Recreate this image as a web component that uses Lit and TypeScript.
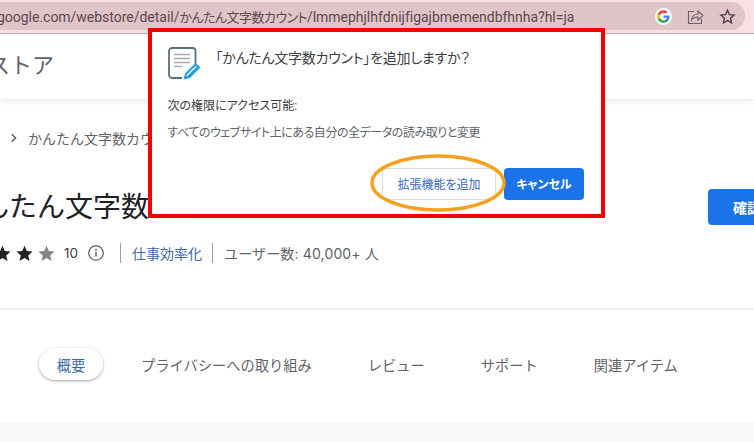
import { LitElement, html, css } from "lit";
import { customElement } from "lit/decorators.js";

const star = (fill: string) => html`<svg class="star" viewBox="0 0 24 24"><path fill=${fill} d="M12 2.2l2.9 6.7 7.3.7-5.5 4.8 1.6 7.1L12 17.8l-6.3 3.7 1.6-7.1-5.5-4.8 7.3-.7z"/></svg>`;

@customElement("app-root")
export class AppRoot extends LitElement {
  static styles = css`
    :host { display: block; position: relative; width: 754px; height: 442px; overflow: hidden; background: #fff;
      font-family: Roboto, "Noto Sans CJK JP", sans-serif; color: #3c4043; }
    .chrome { height: 34px; box-sizing: border-box; background: #fcdfe5; border-bottom: 1px solid #bfaeb3; padding: 2px 9px 0 0; }
    .omni { height: 28px; background: #e1c3ca; border-radius: 0 14px 14px 0; display: flex; align-items: center; padding-right: 9px; overflow: hidden; }
    .url { flex: 1; white-space: nowrap; font-size: 14px; letter-spacing: -.02px; color: #5b4a4f; margin-left: -3px; font-feature-settings: "palt"; }
    .url-cjk { font-size: 13px; letter-spacing: -.55px; }
    .omni-icons { display: flex; align-items: center; gap: 15px; }
    .omni-icons svg { display: block; }
    .store { height: 65px; box-sizing: border-box; padding-bottom: 7px; box-shadow: 0 2px 6px rgba(60,64,67,.12); display: flex; align-items: center; overflow: hidden; }
    .store span { font-size: 22px; color: #5f6368; margin-left: -78px; white-space: nowrap; }
    .crumb { display: flex; align-items: center; margin-top: 28px; height: 22px; padding-left: 9px; gap: 9px; white-space: nowrap; font-size: 14px; color: #5f6368; }
    .title { font-size: 28px; line-height: 36px; margin: 41px 0 0 -47px; color: #202124; white-space: nowrap; }
    .confirm { position: absolute; left: 708px; top: 189px; width: 80px; height: 36px; background: #1a73e8; color: #fff; border-radius: 4px;
      font-size: 14px; font-weight: 700; display: flex; align-items: center; padding-left: 25px; box-sizing: border-box; white-space: nowrap; }
    .meta { display: flex; align-items: center; height: 20px; margin-top: 17px; font-size: 14px; white-space: nowrap; margin-left: -7px; }
    .stars { display: flex; gap: 3px; }
    .star { width: 19px; height: 19px; display: block; }
    .count { margin-left: 8px; color: #3c4043; font-family: Inter, "Noto Sans CJK JP", sans-serif; font-size: 13.5px; }
    .info { margin: 0 16px 0 10px; display: block; }
    .sep { width: 1px; height: 20px; background: #9aa0a6; }
    .cat { color: #3c68a8; margin: 0 10px 0 11px; }
    .users { color: #5f6368; margin-left: 11px; font-family: Inter, "Noto Sans CJK JP", sans-serif; letter-spacing: .15px; }
    .rule { height: 2px; background: #f1f3f4; margin-top: 45px; }
    .tabs { display: flex; align-items: center; height: 32px; margin-top: 38px; padding-left: 39px; gap: 56px; font-size: 14.25px; color: #5f6368; white-space: nowrap; }
    .pill { width: 64px; height: 32px; margin-right: -18px; border-radius: 16px; background: #fff; box-shadow: 0 1px 3px rgba(60,64,67,.45);
      color: #3c68a8; display: flex; align-items: center; justify-content: center; }
    .foot { position: absolute; left: 0; right: 0; bottom: 0; height: 20px; background: #f8f9fa; }
    .dialog { position: absolute; left: 148px; top: 28px; width: 457px; height: 190px; box-sizing: border-box; border: 4.5px solid #f50000;
      background: #fff; padding: 14.5px 17px 0 15.5px; display: flex; flex-direction: column; font-feature-settings: "palt"; }
    .head { display: flex; align-items: flex-start; gap: 15px; }
    .head svg { display: block; flex: none; }
    .head p { margin: 1px 0 0; font-size: 14px; letter-spacing: -.25px; line-height: 20px; color: #3c4043; white-space: nowrap; }
    .access { margin: 17px 0 0; font-size: 12px; line-height: 18px; color: #3c4043; }
    .perm { margin: 9px 0 0; font-size: 12px; letter-spacing: -.45px; line-height: 18px; color: #5f6368; }
    .actions { display: flex; justify-content: flex-end; gap: 8px; margin-top: 26px; }
    .btn { height: 32px; box-sizing: border-box; border-radius: 4px; font-size: 12px; display: flex; align-items: center; justify-content: center; }
    .add { width: 114px; background: #fff; border: 1px solid #dadce0; color: #3c68b8; }
    .cancel { width: 80px; background: #1a73e8; color: #fff; font-weight: 700; }
    .ring { position: absolute; left: 370px; top: 154px; display: block; pointer-events: none; }
  `;

  render() {
    return html`
      <div class="chrome">
        <div class="omni">
          <span class="url">google.com/webstore/detail/<span class="url-cjk">かんたん文字数カウント</span>/lmmephjlhfdnijfigajbmemendbfhnha?hl=ja</span>
          <div class="omni-icons">
            <svg width="17" height="17" viewBox="0 0 24 24"><circle cx="12" cy="12" r="12" fill="#fff"/>
              <path fill="#4285f4" d="M20.6 12.2c0-.6 0-1.200-.2-1.700H12v3.300h4.800c-.2 1.100-.8 2-1.800 2.600v2.200h2.900c1.700-1.500 2.700-3.800 2.700-6.400z"/>
              <path fill="#34a853" d="M12 21c2.400 0 4.400-.8 5.900-2.200L15 16.600c-.8.500-1.800.9-3 .9-2.300 0-4.300-1.600-5-3.700H4v2.300C5.500 19 8.500 21 12 21z"/>
              <path fill="#fbbc05" d="M7 13.800c-.4-1.100-.4-2.500 0-3.600V7.900H4c-1.300 2.500-1.300 5.700 0 8.200z"/>
              <path fill="#ea4335" d="M12 6.600c1.300 0 2.500.5 3.400 1.300l2.600-2.600C16.400 3.900 14.400 3 12 3 8.500 3 5.500 5 4 7.900l3 2.300c.7-2.100 2.700-3.600 5-3.600z"/></svg>
            <svg width="17" height="17" viewBox="0 0 17 17" fill="none" stroke="#6f6166" stroke-width="1.100"><path d="M7 3.500H1.500v12h13V11"/><path d="M4.500 12c.3-3.500 3-6 6.500-6V3l5 4.500L11 12V9c-2.800 0-5 .8-6.500 3z"/></svg>
            <svg width="17" height="17" viewBox="0 0 24 24" fill="none" stroke="#4a3f43" stroke-width="2"><path d="M12 3.200l2.700 6.100 6.600.7-5 4.400 1.400 6.500L12 17.600l-5.700 3.300 1.400-6.500-5-4.400 6.600-.7z"/></svg>
          </div>
        </div>
      </div>
      <div class="store"><span>ウェブストア</span></div>
      <div class="crumb">
        <svg width="10" height="10" viewBox="0 0 10 10" fill="none" stroke="#5f6368" stroke-width="1.600"><path d="M2.800 1.200L6.600 5 2.800 8.800"/></svg>
        <span>かんたん文字数カウント</span>
      </div>
      <div class="title">かんたん文字数カウント</div>
      <div class="meta">
        <span class="stars">${star("#202124")}${star("#202124")}${star("#80868b")}</span>
        <span class="count">10</span>
        <svg class="info" width="16" height="16" viewBox="0 0 16 16" fill="none"><circle cx="8" cy="8" r="7.200" stroke="#5f6368" stroke-width="1.300"/><path d="M8 7v4.500" stroke="#5f6368" stroke-width="1.500"/><circle cx="8" cy="4.800" r="1" fill="#5f6368"/></svg>
        <span class="sep"></span>
        <span class="cat">仕事効率化</span>
        <span class="sep"></span>
        <span class="users">ユーザー数: 40,000+ 人</span>
      </div>
      <div class="rule"></div>
      <div class="tabs">
        <span class="pill">概要</span>
        <span>プライバシーへの取り組み</span>
        <span>レビュー</span>
        <span>サポート</span>
        <span>関連アイテム</span>
      </div>
      <div class="foot"></div>
      <div class="confirm">確認</div>
      <div class="dialog">
        <div class="head">
          <svg width="33" height="33" viewBox="0 0 33 33" fill="none">
            <rect x="1" y="1" width="26.500" height="30" rx="3" stroke="#5a6f7b" stroke-width="1.800"/>
            <path d="M6 7.500h16M6 11.500h16M6 15.500h16M6 19.500h8" stroke="#a9adb0" stroke-width="1.600"/>
            <rect x="14" y="20" width="16" height="12.500" fill="#fff"/>
            <path d="M15.500 32.500l1.500-6L27.500 16l5 4.500L22 31z" fill="#2f9fdc"/>
            <path d="M18.500 28.800l9.500-9.300" stroke="#fff" stroke-width="1.100"/>
          </svg>
          <p>「かんたん文字数カウント」を追加しますか？</p>
        </div>
        <p class="access">次の権限にアクセス可能:</p>
        <p class="perm">すべてのウェブサイト上にある自分の全データの読み取りと変更</p>
        <div class="actions">
          <div class="btn add">拡張機能を追加</div>
          <div class="btn cancel">キャンセル</div>
        </div>
      </div>
      <svg class="ring" width="136" height="58" viewBox="0 0 136 58" fill="none"><ellipse cx="68" cy="29" rx="66" ry="27" stroke="#f7a01d" stroke-width="3.500"/></svg>
    `;
  }
}
